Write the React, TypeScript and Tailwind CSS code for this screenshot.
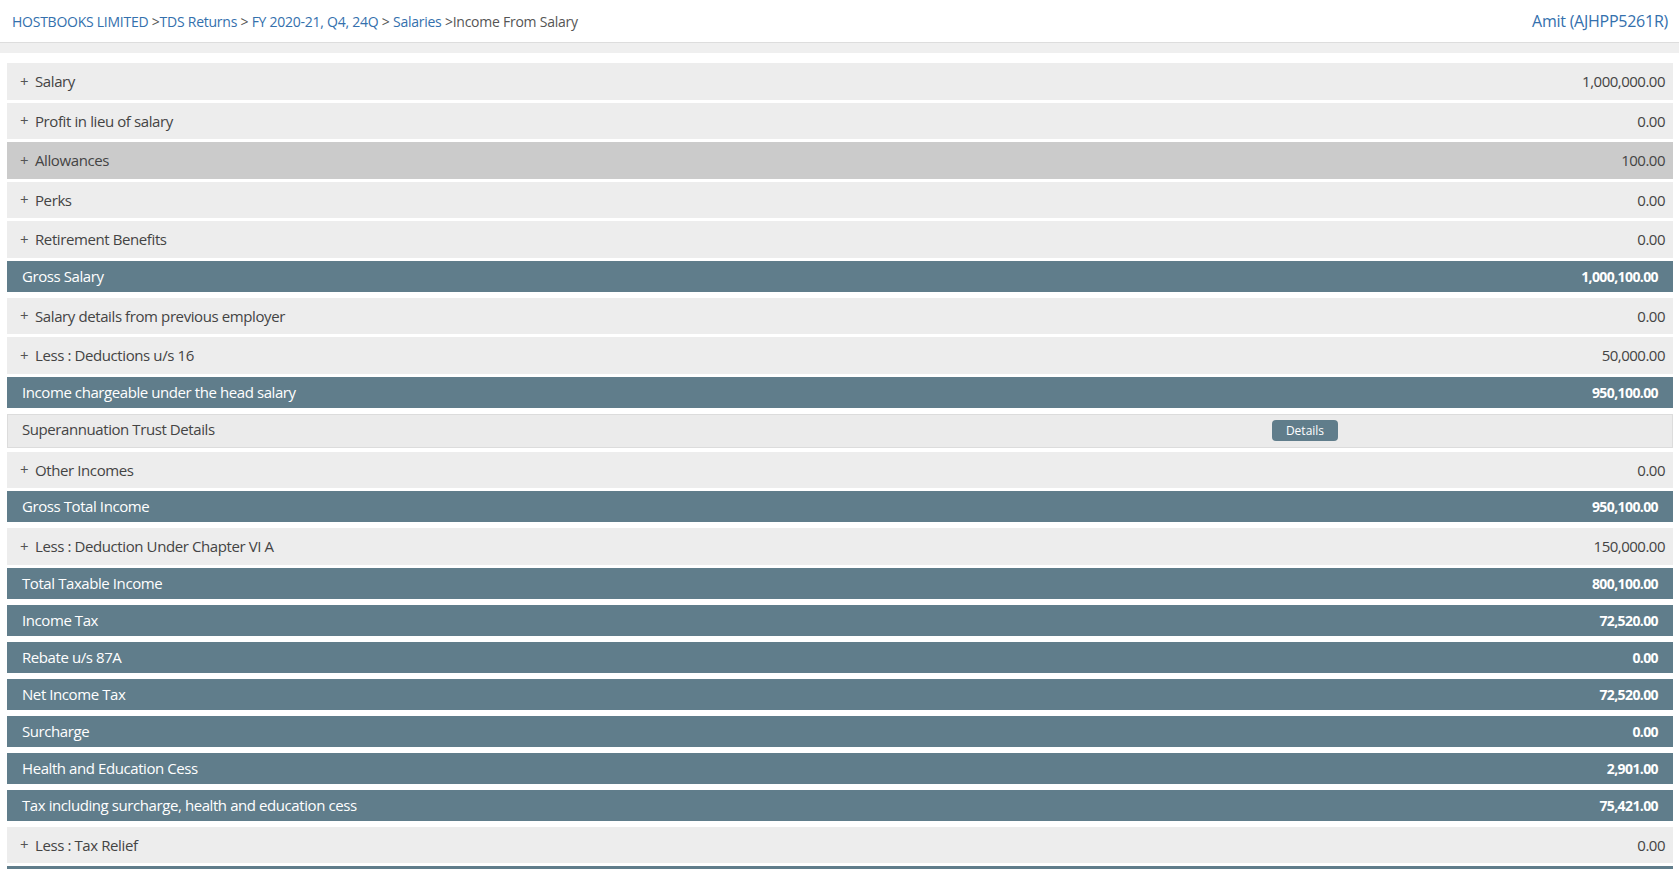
import React from "react";

type Row =
  | { kind: "light"; label: string; value: string; hl?: boolean }
  | { kind: "dark"; label: string; value: string }
  | { kind: "super"; label: string };

const rows: Row[] = [
  { kind: "light", label: "Salary", value: "1,000,000.00" },
  { kind: "light", label: "Profit in lieu of salary", value: "0.00" },
  { kind: "light", label: "Allowances", value: "100.00", hl: true },
  { kind: "light", label: "Perks", value: "0.00" },
  { kind: "light", label: "Retirement Benefits", value: "0.00" },
  { kind: "dark", label: "Gross Salary", value: "1,000,100.00" },
  { kind: "light", label: "Salary details from previous employer", value: "0.00" },
  { kind: "light", label: "Less : Deductions u/s 16", value: "50,000.00" },
  { kind: "dark", label: "Income chargeable under the head salary", value: "950,100.00" },
  { kind: "super", label: "Superannuation Trust Details" },
  { kind: "light", label: "Other Incomes", value: "0.00" },
  { kind: "dark", label: "Gross Total Income", value: "950,100.00" },
  { kind: "light", label: "Less : Deduction Under Chapter VI A", value: "150,000.00" },
  { kind: "dark", label: "Total Taxable Income", value: "800,100.00" },
  { kind: "dark", label: "Income Tax", value: "72,520.00" },
  { kind: "dark", label: "Rebate u/s 87A", value: "0.00" },
  { kind: "dark", label: "Net Income Tax", value: "72,520.00" },
  { kind: "dark", label: "Surcharge", value: "0.00" },
  { kind: "dark", label: "Health and Education Cess", value: "2,901.00" },
  { kind: "dark", label: "Tax including surcharge, health and education cess", value: "75,421.00" },
  { kind: "light", label: "Less : Tax Relief", value: "0.00" },
  { kind: "dark", label: "", value: "" },
];

function RowView({ row }: { row: Row }) {
  if (row.kind === "light") {
    return (
      <div
        className={`flex h-[36.5px] mb-[3px] items-center justify-between pl-[13px] pr-[8px] text-[#444] ${
          row.hl ? "bg-[#cbcbcb]" : "bg-[#ededed]"
        }`}
      >
        <div className="flex items-center">
          <span className="w-[15px] text-[15px] text-[#555] leading-none">+</span>
          <span className="tracking-[-0.4px]">{row.label}</span>
        </div>
        <span>{row.value}</span>
      </div>
    );
  }
  if (row.kind === "dark") {
    return (
      <div className="flex h-[31px] mb-[6px] items-center justify-between bg-[#607d8b] pl-[15px] pr-[15px] text-white">
        <span className="tracking-[-0.42px]">{row.label}</span>
        <span className="font-bold text-[14px] tracking-[-0.6px]">{row.value}</span>
      </div>
    );
  }
  return (
    <div className="flex h-[34px] mb-[4px] items-center border border-[#dcdcdc] bg-[#ebebeb] pl-[14px] text-[#444]">
      <span className="w-[1250px] pb-[3px] tracking-[-0.42px]">{row.label}</span>
      <button className="h-[21px] w-[66px] rounded-[4px] bg-[#607d8b] text-[12px] leading-none text-white tracking-normal">
        Details
      </button>
    </div>
  );
}

export default function App() {
  return (
    <div
      className="min-h-screen bg-white text-[15px] tracking-[-0.5px]"
      style={{ fontFamily: '"Open Sans", "Noto Sans", sans-serif' }}
    >
      <header className="flex h-[43px] items-center justify-between border-b border-[#dddddd] pl-[12px] pr-[11px]">
        <div className="text-[14px] tracking-[-0.25px] text-[#555]">
          <span className="text-[#3470ad]">HOSTBOOKS LIMITED</span>
          <span> &gt;</span>
          <span className="text-[#3470ad]">TDS Returns</span>
          <span> &gt; </span>
          <span className="text-[#3470ad]">FY 2020-21, Q4, 24Q</span>
          <span> &gt; </span>
          <span className="text-[#3470ad]">Salaries</span>
          <span> &gt;</span>
          <span>Income From Salary</span>
        </div>
        <div className="text-[16px] tracking-[-0.25px] text-[#3470ad]">Amit (AJHPP5261R)</div>
      </header>
      <div className="h-[10px] bg-[#efefef]" />
      <div className="pl-[7px] pr-[6px] pt-[10px]">
        {rows.map((r, i) => (
          <RowView key={i} row={r} />
        ))}
      </div>
    </div>
  );
}
